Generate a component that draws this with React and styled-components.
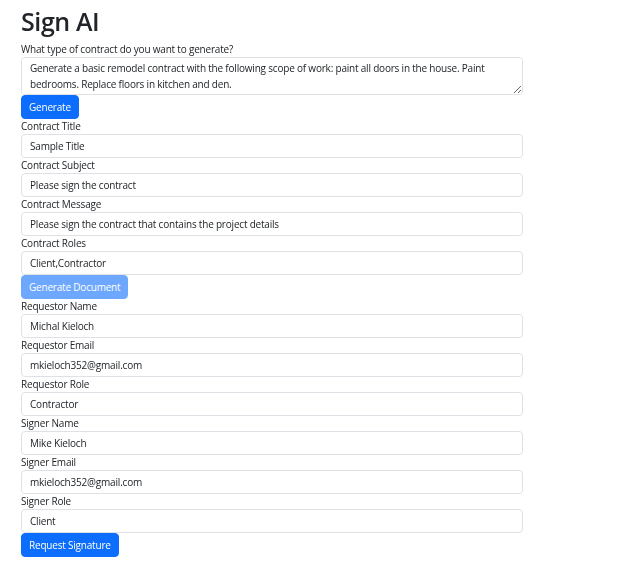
import React from 'react';
import styled, { createGlobalStyle } from 'styled-components';

const GlobalStyle = createGlobalStyle`
  * {
    box-sizing: border-box;
  }
  body {
    margin: 0;
    background: #fff;
    color: #212529;
    font-family: "Open Sans", "Noto Sans", sans-serif;
    font-size: 10px;
    letter-spacing: -0.2px;
  }
`;

const StyledPage = styled.div`
  width: 502px;
  margin-left: 21px;
  padding-top: 6px;
`;

const StyledTitle = styled.h1`
  margin: 0 0 5px;
  font-size: 25px;
  font-weight: 600;
  line-height: 31px;
  letter-spacing: -0.4px;
`;

const StyledLabel = styled.label`
  display: block;
  font-size: 10px;
  line-height: 15px;
`;

const StyledInput = styled.input`
  display: block;
  width: 100%;
  height: 24px;
  padding: 0 8px;
  font-family: inherit;
  font-size: 10px;
  letter-spacing: inherit;
  color: #212529;
  background: #fff;
  border: 1px solid #dee2e6;
  border-radius: 4px;
  outline: none;
`;

const StyledTextarea = styled.textarea`
  display: block;
  width: 100%;
  height: 38px;
  padding: 3px 8px;
  font-family: inherit;
  font-size: 10px;
  letter-spacing: inherit;
  line-height: 15.5px;
  color: #212529;
  background: #fff;
  border: 1px solid #dee2e6;
  border-radius: 4px;
  resize: vertical;
  outline: none;
`;

const StyledButton = styled.button`
  display: block;
  height: 24px;
  padding: 0 7px;
  font-family: inherit;
  font-size: 10px;
  letter-spacing: inherit;
  color: #fff;
  background-color: #0d6efd;
  border: 1px solid #0d6efd;
  border-radius: 4px;
  opacity: ${({ disabled }) => (disabled ? 0.6 : 1)};
`;

const Field = ({ label, id, value }) => (
  <>
    <StyledLabel htmlFor={id}>{label}</StyledLabel>
    <StyledInput id={id} type="text" defaultValue={value} />
  </>
);

const contractFields = [
  { id: 'title', label: 'Contract Title', value: 'Sample Title' },
  { id: 'subject', label: 'Contract Subject', value: 'Please sign the contract' },
  { id: 'message', label: 'Contract Message', value: 'Please sign the contract that contains the project details' },
  { id: 'roles', label: 'Contract Roles', value: 'Client,Contractor' }
];

const signerFields = [
  { id: 'reqName', label: 'Requestor Name', value: 'Michal Kieloch' },
  { id: 'reqEmail', label: 'Requestor Email', value: 'mkieloch352@gmail.com' },
  { id: 'reqRole', label: 'Requestor Role', value: 'Contractor' },
  { id: 'signName', label: 'Signer Name', value: 'Mike Kieloch' },
  { id: 'signEmail', label: 'Signer Email', value: 'mkieloch352@gmail.com' },
  { id: 'signRole', label: 'Signer Role', value: 'Client' }
];

const App = () => {
  return (
    <>
      <GlobalStyle />
      <StyledPage>
        <StyledTitle>Sign AI</StyledTitle>
        <StyledLabel htmlFor="prompt">What type of contract do you want to generate?</StyledLabel>
        <StyledTextarea
          id="prompt"
          defaultValue="Generate a basic remodel contract with the following scope of work: paint all doors in the house. Paint bedrooms. Replace floors in kitchen and den."
        />
        <StyledButton type="button">Generate</StyledButton>

        {contractFields.map(f => <Field key={f.id} {...f} />)}
        <StyledButton type="button" disabled>Generate Document</StyledButton>

        {signerFields.map(f => <Field key={f.id} {...f} />)}
        <StyledButton type="button">Request Signature</StyledButton>
      </StyledPage>
    </>
  );
};

export default App;
